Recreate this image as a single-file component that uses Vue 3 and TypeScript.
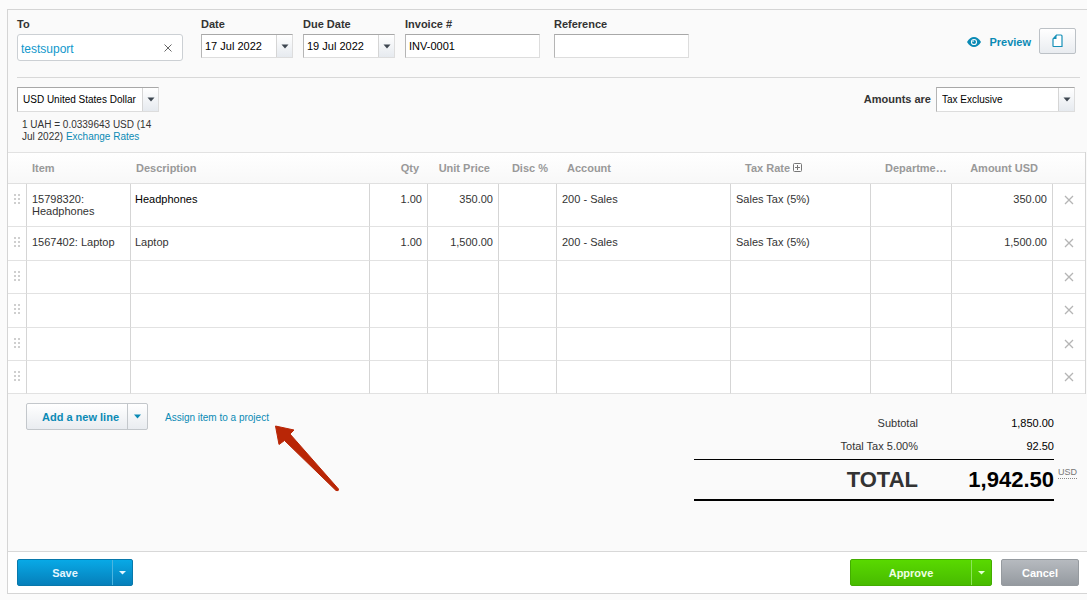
<script setup lang="ts">
import { ref } from 'vue'

interface Line {
  item: string
  description: string
  qty: string
  price: string
  account: string
  tax: string
  amount: string
}

const emptyLine = (): Line => ({ item: '', description: '', qty: '', price: '', account: '', tax: '', amount: '' })

const contact = ref('testsuport')
const date = ref('17 Jul 2022')
const dueDate = ref('19 Jul 2022')
const invoiceNumber = ref('INV-0001')
const reference = ref('')

const lines = ref<Line[]>([
  { item: '15798320: Headphones', description: 'Headphones', qty: '1.00', price: '350.00', account: '200 - Sales', tax: 'Sales Tax (5%)', amount: '350.00' },
  { item: '1567402: Laptop', description: 'Laptop', qty: '1.00', price: '1,500.00', account: '200 - Sales', tax: 'Sales Tax (5%)', amount: '1,500.00' },
  emptyLine(),
  emptyLine(),
  emptyLine(),
  emptyLine(),
])

const addLine = () => lines.value.push(emptyLine())
const removeLine = (index: number) => lines.value.splice(index, 1)
</script>

<template>
  <form class="invoice" @submit.prevent>
    <header class="details">
      <div class="field contact-field">
        <label for="contact">To</label>
        <div class="contact-box">
          <input id="contact" v-model="contact" type="text" />
          <button type="button" class="clear" aria-label="Clear contact" @click="contact = ''">
            <svg width="8" height="8" viewBox="0 0 8 8"><path d="M0.5 0.5L7.500 7.500M7.500 0.500L0.500 7.500" stroke="#666" fill="none" /></svg>
          </button>
        </div>
      </div>
      <div class="field date-field">
        <label for="date">Date</label>
        <div class="combo">
          <input id="date" v-model="date" type="text" />
          <button type="button" class="drop" aria-label="Pick date">
            <svg width="8" height="5" viewBox="0 0 8 5"><path d="M0.5 0.5H7.5L4 4.5Z" fill="#3d4650" /></svg>
          </button>
        </div>
      </div>
      <div class="field date-field">
        <label for="due">Due Date</label>
        <div class="combo">
          <input id="due" v-model="dueDate" type="text" />
          <button type="button" class="drop" aria-label="Pick due date">
            <svg width="8" height="5" viewBox="0 0 8 5"><path d="M0.5 0.5H7.5L4 4.5Z" fill="#3d4650" /></svg>
          </button>
        </div>
      </div>
      <div class="field text-field">
        <label for="number">Invoice #</label>
        <div class="combo"><input id="number" v-model="invoiceNumber" type="text" /></div>
      </div>
      <div class="field text-field reference-field">
        <label for="reference">Reference</label>
        <div class="combo"><input id="reference" v-model="reference" type="text" /></div>
      </div>
      <div class="tools">
        <a href="#" class="preview">
          <svg width="14" height="10" viewBox="0 0 14 10">
            <path d="M0 5C2 1.6 4.4 0 7 0s5 1.6 7 5c-2 3.400-4.400 5-7 5S2 8.400 0 5Z" fill="#0a8ab5" />
            <circle cx="7" cy="5" r="3.100" fill="#fafafa" />
            <circle cx="7" cy="5" r="2" fill="#0a8ab5" />
            <path d="M7 5V3A2 2 0 0 0 5 5Z" fill="#8fcbe0" />
          </svg>
          <span>Preview</span>
        </a>
        <button type="button" class="file" aria-label="Attach files">
          <svg width="11" height="14" viewBox="0 0 11 14">
            <path d="M4.500 1H9Q10 1 10 2V12.500H1.500Q1 12.500 1 12V5Z" fill="#fff" stroke="#1690b8" stroke-width="1.200" />
            <path d="M4.500 1V5H1Z" fill="#1690b8" />
          </svg>
        </button>
      </div>
    </header>

    <section class="settings">
      <div class="currency">
        <div class="choice">
          <select aria-label="Currency"><option>USD United States Dollar</option></select>
          <span class="drop">
            <svg width="8" height="5" viewBox="0 0 8 5"><path d="M0.500 0.500H7.500L4 4.500Z" fill="#3d4650" /></svg>
          </span>
        </div>
        <p>1 UAH = 0.0339643 USD (14 Jul 2022) <a href="#">Exchange Rates</a></p>
      </div>
      <div class="amounts">
        <label for="amounts">Amounts are</label>
        <div class="choice">
          <select id="amounts"><option>Tax Exclusive</option></select>
          <span class="drop">
            <svg width="8" height="5" viewBox="0 0 8 5"><path d="M0.500 0.500H7.500L4 4.500Z" fill="#3d4650" /></svg>
          </span>
        </div>
      </div>
    </section>

    <table class="lines">
      <colgroup>
        <col class="c-drag" /><col class="c-item" /><col /><col class="c-qty" /><col class="c-price" /><col class="c-qty" />
        <col class="c-account" /><col class="c-tax" /><col class="c-dept" /><col class="c-amount" /><col class="c-remove" />
      </colgroup>
      <thead>
        <tr>
          <th></th>
          <th>Item</th>
          <th>Description</th>
          <th class="num">Qty</th>
          <th class="num">Unit Price</th>
          <th class="num">Disc %</th>
          <th class="inset">Account</th>
          <th class="wide-inset">Tax Rate
            <svg class="plus" width="9" height="9" viewBox="0 0 9 9"><path d="M.5 1.500Q.5.5 1.500.5H7.500Q8.500.5 8.500 1.500V7.500Q8.500 8.500 7.500 8.500H1.500Q.5 8.500.5 7.500ZM4.500 2V7M2 4.500H7" fill="none" stroke="#777" /></svg>
          </th>
          <th class="wide-inset">Departme…</th>
          <th class="num amount">Amount USD</th>
          <th></th>
        </tr>
      </thead>
      <tbody>
        <tr v-for="(line, index) in lines" :key="index">
          <td class="icon">
            <svg class="grip" width="6" height="10" viewBox="0 0 6 10"><path d="M0 0h2v2H0zM4 0h2v2H4zM0 4h2v2H0zM4 4h2v2H4zM0 8h2v2H0zM4 8h2v2H4z" fill="#cfcfcf" /></svg>
          </td>
          <td>{{ line.item }}</td>
          <td class="description">{{ line.description }}</td>
          <td class="num">{{ line.qty }}</td>
          <td class="num">{{ line.price }}</td>
          <td></td>
          <td>{{ line.account }}</td>
          <td>{{ line.tax }}</td>
          <td></td>
          <td class="num">{{ line.amount }}</td>
          <td class="icon">
            <button type="button" class="remove" aria-label="Remove line" @click="removeLine(index)">
              <svg width="10" height="10" viewBox="0 0 10 10"><path d="M1 1L9 9M9 1L1 9" stroke="#b5b5b5" stroke-width="1.300" fill="none" /></svg>
            </button>
          </td>
        </tr>
      </tbody>
    </table>

    <section class="summary">
      <div class="line-actions">
        <div class="split add">
          <button type="button" @click="addLine">Add a new line</button>
          <button type="button" class="more" aria-label="More line options">
            <svg width="7" height="5" viewBox="0 0 7 5"><path d="M0 .5H7L3.500 4.500Z" fill="#0a8ab5" /></svg>
          </button>
        </div>
        <a href="#" class="assign">Assign item to a project</a>
        <svg class="pointer" width="68" height="70" viewBox="0 0 68 70">
          <path d="M1.500 2L20 6L16 10L64.500 65Q65 67.500 62 66.500L10.500 16.500L5 20.500Z" fill="#b92606" stroke="#b92606" stroke-linejoin="round" />
        </svg>
      </div>
      <dl class="totals">
        <div><dt>Subtotal</dt><dd>1,850.00</dd></div>
        <div><dt>Total Tax 5.00%</dt><dd>92.50</dd></div>
        <div class="grand"><dt>TOTAL</dt><dd>1,942.50</dd></div>
      </dl>
      <abbr class="unit">USD</abbr>
    </section>

    <footer class="actions">
      <div class="split save">
        <button type="submit">Save</button>
        <button type="button" class="more" aria-label="More save options">
          <svg width="7" height="4" viewBox="0 0 7 4"><path d="M0 0H7L3.500 3.500Z" fill="#e4f6ff" /></svg>
        </button>
      </div>
      <div class="finish">
        <div class="split approve">
          <button type="button">Approve</button>
          <button type="button" class="more" aria-label="More approve options">
            <svg width="7" height="4" viewBox="0 0 7 4"><path d="M0 0H7L3.500 3.500Z" fill="#e2ffd2" /></svg>
          </button>
        </div>
        <button type="button" class="cancel">Cancel</button>
      </div>
    </footer>
  </form>
</template>

<style>
body {
  margin: 0;
  background: #fbfbfb;
}
</style>

<style scoped>
* {
  box-sizing: border-box;
}

.invoice {
  margin: 9px 0 6px 7px;
  border: 1px solid #d5d5d5;
  border-right: 0;
  background: #fafafa;
  color: #333;
  font: 11px/12px "Liberation Sans", Arial, sans-serif;
}

svg {
  display: block;
  flex: none;
}

a {
  color: #0a8ab5;
  text-decoration: none;
}

button,
input,
select {
  margin: 0;
  padding: 0;
  border: 0;
  background: none;
  color: #000;
  font: inherit;
}

button {
  display: flex;
  align-items: center;
  justify-content: center;
  cursor: pointer;
}

label {
  font-weight: bold;
}

.details {
  display: flex;
  height: 68px;
  margin: 0 7px 0 9px;
  padding-top: 8px;
  border-bottom: 1px solid #d8d8d8;
}

.field {
  display: flex;
  flex-direction: column;
  gap: 4px;
}

.contact-field {
  width: 166px;
  margin-right: 18px;
}

.date-field {
  width: 92px;
  margin-right: 10px;
}

.text-field {
  width: 135px;
}

.reference-field {
  margin-left: 14px;
}

.contact-box {
  display: flex;
  height: 27px;
  border: 1px solid #ccd0d4;
  border-radius: 3px;
  background: #fff;
}

.contact-box input {
  flex: 1;
  min-width: 0;
  padding: 2px 0 0 3px;
  color: #1098cc;
  font-size: 12px;
}

.clear {
  width: 28px;
}

.combo,
.choice {
  display: flex;
  height: 24px;
  border: 1px solid #ddd;
  border-top-color: #a8a8a8;
  border-left-color: #b5b5b5;
  background: #fff;
}

.combo input {
  flex: 1;
  min-width: 0;
  padding-left: 3px;
}

.drop {
  display: flex;
  align-items: center;
  justify-content: center;
  width: 16px;
  border-left: 1px solid #d5d5d5;
  background: linear-gradient(#fff, #e6eaef);
}

.tools {
  display: flex;
  flex: 1;
  justify-content: flex-end;
  gap: 8px;
  padding: 10px 4px 0 0;
}

.preview {
  display: flex;
  align-items: center;
  gap: 8px;
  height: 28px;
  font-weight: bold;
}

.file {
  width: 37px;
  height: 26px;
  border: 1px solid #bcc1c6;
  border-radius: 2px;
  background: linear-gradient(#fff, #e9ecf0);
}

.settings {
  display: flex;
  justify-content: space-between;
  height: 74px;
  padding: 9px 12px 0 9px;
}

.choice {
  position: relative;
  height: 25px;
}

.choice select {
  flex: 1;
  min-width: 0;
  padding: 0 16px 0 5px;
  font-size: 10px;
  appearance: none;
}

.choice .drop {
  position: absolute;
  top: 0;
  right: 0;
  bottom: 0;
  pointer-events: none;
}

.currency {
  width: 142px;
}

.currency p {
  margin: 7px 0 0 5px;
  font-size: 10px;
}

.amounts {
  display: flex;
  gap: 5px;
}

.amounts label {
  padding-top: 6px;
}

.amounts .choice {
  width: 139px;
}

.lines {
  width: calc(100% - 1px);
  border-collapse: separate;
  border-spacing: 0;
  table-layout: fixed;
  border-right: 1px solid #d5d5d5;
  background: #fff;
}

.c-drag { width: 19px; }
.c-item { width: 104px; }
.c-qty { width: 58px; }
.c-price { width: 71px; }
.c-account { width: 174px; }
.c-tax { width: 140px; }
.c-dept { width: 81px; }
.c-amount { width: 101px; }
.c-remove { width: 32px; }

th {
  height: 32px;
  padding: 0 5px;
  border-top: 1px solid #e2e2e2;
  border-bottom: 1px solid #e0e0e0;
  background: linear-gradient(#fff, #f8f8f8);
  color: #999;
  text-align: left;
  white-space: nowrap;
}

th.num {
  padding-right: 9px;
}

th.amount {
  padding-right: 15px;
}

th.inset {
  padding-left: 10px;
}

th.wide-inset {
  padding-left: 14px;
}

.plus {
  display: inline-block;
}

.num {
  text-align: right;
}

td {
  height: 33px;
  padding: 9px 5px;
  border-right: 1px solid #d5d5d5;
  border-bottom: 1px solid #e2e2e2;
  vertical-align: top;
}

tr:nth-child(even):not(:last-child) td {
  height: 34px;
}

td:last-child {
  border-right: 0;
}

td.description {
  padding-left: 4px;
}

tr:first-child .description {
  color: #000;
}

td.icon {
  padding: 10px 0 0;
}

.grip {
  margin: 0 auto;
}

.remove {
  width: 100%;
  height: 12px;
}

.summary {
  display: flex;
  height: 157px;
  padding: 9px 10px 0 18px;
}

.line-actions {
  display: flex;
  flex: 1;
  align-items: flex-start;
  position: relative;
}

.split {
  display: flex;
  height: 27px;
  border-radius: 2px;
}

.split button {
  flex: 1;
  color: inherit;
  font-weight: bold;
}

.split .more {
  flex: none;
  width: 20px;
  border-left: 1px solid;
}

.add {
  width: 122px;
  border: 1px solid #c3c7cb;
  background: linear-gradient(#fff, #e9ecf0);
  color: #0a8ab5;
}

.add button:first-child {
  padding-left: 7px;
}

.add .more {
  border-color: #c3c7cb;
}

.assign {
  margin: 9px 0 0 17px;
  font-size: 10px;
}

.pointer {
  position: absolute;
  top: 21px;
  left: 248px;
}

.totals {
  width: 360px;
  margin: 14px 4px 0 0;
}

.totals div {
  display: flex;
  height: 23px;
}

.totals dt {
  width: 224px;
  text-align: right;
}

.totals dd {
  flex: 1;
  margin: 0;
  color: #000;
  text-align: right;
}

.totals .grand {
  align-items: center;
  height: 42px;
  margin-top: -4px;
  border-top: 1px solid #000;
  border-bottom: 2px solid #000;
  font-size: 22px;
  font-weight: bold;
  line-height: 26px;
}

.unit {
  align-self: flex-start;
  margin-top: 64px;
  border-bottom: 1px dotted #888;
  color: #777;
  font-size: 9px;
  line-height: 11px;
}

.actions {
  display: flex;
  justify-content: space-between;
  padding: 7px 8px 7px 9px;
  border-top: 1px solid #d8d8d8;
  background: #fff;
}

.finish {
  display: flex;
  gap: 9px;
}

.save {
  width: 116px;
  border: 1px solid #0878ab;
  background: linear-gradient(#08a9e6, #067fba);
  color: #e4f6ff;
}

.save .more {
  border-color: #4bb5e0;
}

.approve {
  width: 142px;
  border: 1px solid #43ad00;
  background: linear-gradient(#59d900, #48bb00);
  color: #efffe4;
}

.approve .more {
  border-color: #8ce45a;
}

.cancel {
  width: 78px;
  height: 27px;
  border: 1px solid #959a9f;
  border-radius: 2px;
  background: linear-gradient(#b6babf, #959aa0);
  color: #fff;
  font-weight: bold;
}
</style>
